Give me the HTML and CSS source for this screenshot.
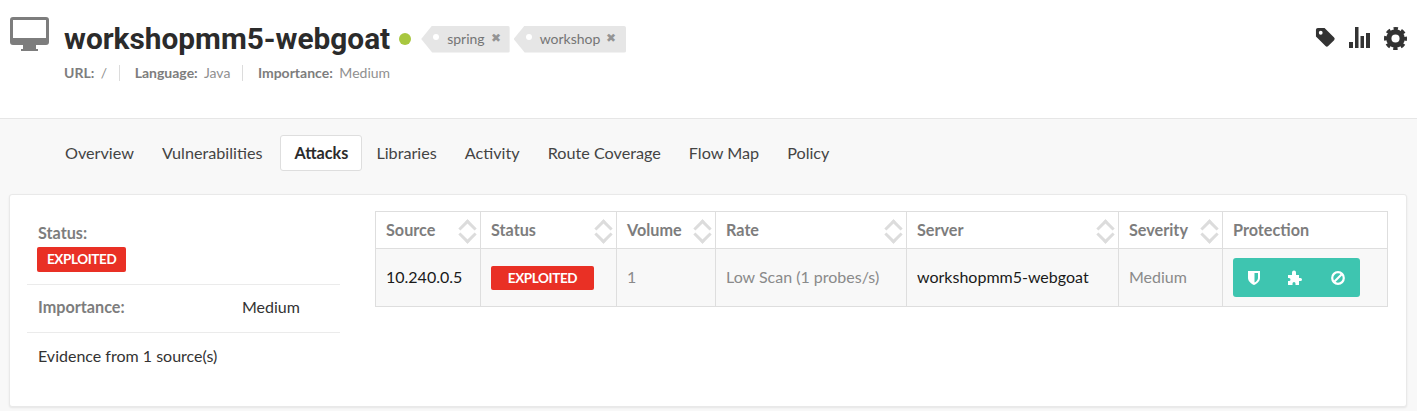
FILE: index.html
```html
<!DOCTYPE html>
<html lang="en">
  <head>
    <meta charset="UTF-8" />
    <title>workshopmm5-webgoat</title>
    <link rel="stylesheet" href="styles.css">
  </head>
  <body>
    <header class="app-header">
      <svg class="app-icon" viewBox="0 0 39 34" aria-hidden="true">
        <path fill="#7d7d7d" d="M3 0h33a3 3 0 0 1 3 3v22a3 3 0 0 1-3 3H26v4h2v2H11v-2h2v-4H3a3 3 0 0 1-3-3V3a3 3 0 0 1 3-3z" />
        <rect x="3" y="3" width="33" height="18" fill="#fff" />
      </svg>
      <div class="app-info">
        <div class="title-row">
          <h1>workshopmm5-webgoat</h1>
          <span class="status-dot"></span>
          <span class="tag">spring <span class="tag-x">&#10006;</span></span>
          <span class="tag">workshop <span class="tag-x">&#10006;</span></span>
        </div>
        <div class="meta-row">
          <span><b>URL:</b> /</span>
          <span class="meta-sep"></span>
          <span><b>Language:</b> Java</span>
          <span class="meta-sep"></span>
          <span><b>Importance:</b> Medium</span>
        </div>
      </div>
      <div class="header-actions">
        <svg width="21" height="21" viewBox="0 0 22 22" aria-hidden="true">
          <path fill="#333" fill-rule="evenodd" d="M3 1h7l10 10a2 2 0 0 1 0 2.800l-6.200 6.200a2 2 0 0 1-2.800 0L1 10V3a2 2 0 0 1 2-2zm3 3a2 2 0 1 0 0 4 2 2 0 0 0 0-4z" />
        </svg>
        <svg width="22" height="21" viewBox="0 0 22 21" aria-hidden="true">
          <path fill="#333" d="M0 15h4v6H0zM6 0h3.500v21H6zM11.500 9H15v12h-3.500zM17 6h4v15h-4z" />
        </svg>
        <svg width="23" height="23" viewBox="0 0 24 24" aria-hidden="true">
          <circle cx="12" cy="12" r="7" fill="none" stroke="#333" stroke-width="5.500" />
          <circle cx="12" cy="12" r="10" fill="none" stroke="#333" stroke-width="4" stroke-dasharray="4.400 3.450" stroke-dashoffset="2.200" />
        </svg>
      </div>
    </header>

    <main class="content">
      <nav class="tabs">
        <a>Overview</a>
        <a>Vulnerabilities</a>
        <a class="active">Attacks</a>
        <a>Libraries</a>
        <a>Activity</a>
        <a>Route Coverage</a>
        <a>Flow Map</a>
        <a>Policy</a>
      </nav>

      <section class="card">
        <aside class="summary">
          <div class="summary-row status-row">
            <div class="label">Status:</div>
            <span class="badge">EXPLOITED</span>
          </div>
          <div class="summary-row importance-row">
            <span class="label importance-label">Importance:</span>
            <span>Medium</span>
          </div>
          <div class="summary-row evidence-row">Evidence from 1 source(s)</div>
        </aside>

        <table class="attacks">
          <colgroup>
            <col class="c-source" /><col class="c-status" /><col class="c-volume" /><col class="c-rate" />
            <col class="c-server" /><col class="c-severity" /><col class="c-protection" />
          </colgroup>
          <thead>
            <tr>
              <th>Source<span class="sort"></span></th>
              <th>Status<span class="sort"></span></th>
              <th>Volume<span class="sort"></span></th>
              <th>Rate<span class="sort"></span></th>
              <th>Server<span class="sort"></span></th>
              <th>Severity<span class="sort"></span></th>
              <th>Protection</th>
            </tr>
          </thead>
          <tbody>
            <tr>
              <td class="text dark">10.240.0.5</td>
              <td><span class="badge badge-wide">EXPLOITED</span></td>
              <td class="text">1</td>
              <td class="text">Low Scan (1 probes/s)</td>
              <td class="text dark">workshopmm5-webgoat</td>
              <td class="text">Medium</td>
              <td>
                <div class="protect">
                  <svg width="14" height="14" viewBox="0 0 14 14" aria-hidden="true">
                    <path fill="#fff" d="M1 0h12v7c0 3-2.800 5.500-6 7C3.800 12.500 1 10 1 7z" />
                    <path fill="#3ec5b0" d="M7.500 2H11v5c0 1.800-1.500 3.400-3.500 4.600z" />
                  </svg>
                  <svg width="16" height="15" viewBox="0 0 16 15" aria-hidden="true">
                    <path fill="#fff" d="M0 5h4V2.500a2 2 0 0 1 4 0V5h3v3h1.500a1.500 1.500 0 0 1 0 3H11v4H7.500v-1.500a1.500 1.500 0 0 0-3 0V15H0v-4h1a1.500 1.500 0 0 0 0-3H0z" />
                  </svg>
                  <svg width="14" height="14" viewBox="0 0 14 14" aria-hidden="true">
                    <circle cx="7" cy="7" r="5.800" fill="none" stroke="#fff" stroke-width="2.200" />
                    <path stroke="#fff" stroke-width="2.200" d="M3 11L11 3" />
                  </svg>
                </div>
              </td>
            </tr>
          </tbody>
        </table>
      </section>
    </main>
  </body>
</html>
```

FILE: styles.css
```css
* {
  box-sizing: border-box;
}

html,
body {
  height: 100%;
}

body {
  margin: 0;
  font-family: Lato, sans-serif;
  font-size: 16px;
  color: #333;
  background-color: #f8f8f8;
  overflow: hidden;
}

.app-header {
  display: flex;
  height: 119px;
  padding: 17px 9px 0 10px;
  background: #fff;
  border-bottom: 1px solid #e6e6e6;
}

.app-icon {
  width: 39px;
  height: 34px;
  flex: none;
}

.app-info {
  margin-left: 15px;
}

.title-row {
  display: flex;
  align-items: center;
  height: 44px;
}

h1 {
  margin: 0 0 2px;
  font-family: Roboto, sans-serif;
  font-size: 29.800px;
  font-weight: 700;
  color: #2b2b2b;
}

.status-dot {
  width: 12px;
  height: 12px;
  margin: 0 10px 0 9px;
  border-radius: 50%;
  background: #a8c73f;
}

.tag {
  position: relative;
  display: inline-flex;
  align-items: center;
  gap: 6px;
  height: 27px;
  margin-right: 4px;
  padding: 0 9px 2px 26px;
  font-size: 14px;
  color: #757575;
  background: #e6e6e6;
  border-radius: 2px;
  clip-path: polygon(0 50%, 11px 0, 100% 0, 100% 100%, 11px 100%);
}

.tag + .tag {
  padding-right: 10px;
}

.tag::before {
  content: "";
  position: absolute;
  left: 12px;
  top: 8px;
  width: 6px;
  height: 6px;
  border-radius: 50%;
  background: #fff;
}

.tag-x {
  font-size: 11.500px;
  color: #949494;
}

.meta-row {
  display: flex;
  align-items: center;
  gap: 12px;
  margin-top: 3px;
  font-size: 14px;
  color: #8f8f8f;
}

.meta-row b {
  margin-right: 3px;
  color: #7d7d7d;
}

.meta-sep {
  width: 1px;
  height: 16px;
  margin-right: 2.500px;
  background: #dcdcdc;
}

.header-actions {
  display: flex;
  align-items: flex-start;
  gap: 13px;
  margin: 10px 0 0 auto;
  padding-right: 1px;
}

.tabs {
  display: flex;
  align-items: center;
  height: 75px;
  padding: 0 0 8px 51px;
}

.tabs a {
  padding: 0 13px;
  font-size: 16.200px;
  line-height: 34px;
  color: #444;
  border: 1px solid transparent;
  border-radius: 3px;
}

.tabs a.active {
  margin-left: 4px;
  font-weight: 700;
  color: #2b2b2b;
  background: #fff;
  border-color: #dedede;
}

.card {
  display: flex;
  gap: 35px;
  height: 213px;
  margin: 0 10px 0 9px;
  padding: 16px 18px 0 17px;
  background: #fff;
  border: 1px solid #e9e9e9;
  border-radius: 3px;
  box-shadow: 0 1px 2px rgba(0, 0, 0, 0.08);
}

.summary {
  width: 313px;
  flex: none;
}

.summary-row {
  padding: 0 10px;
  border-bottom: 1px solid #ebebeb;
}

.status-row {
  height: 74px;
  padding-top: 12px;
}

.importance-row {
  display: flex;
  height: 48px;
  align-items: center;
  padding-bottom: 4px;
}

.evidence-row {
  padding: 13px 10px 0 11px;
  border-bottom: none;
}

.label {
  margin-left: 1px;
  font-size: 16.200px;
  font-weight: 700;
  color: #7d7d7d;
}

.status-row .label {
  margin-bottom: 5px;
}

.importance-label {
  width: 204px;
}

.badge {
  display: inline-block;
  height: 25px;
  padding: 0 10px;
  font-size: 13.500px;
  font-weight: 700;
  line-height: 24px;
  letter-spacing: -0.4px;
  color: #fff;
  background: #e93025;
  border-radius: 2px;
}

.badge-wide {
  display: block;
  width: 103px;
  height: 24px;
  padding: 0;
  text-align: center;
}

.attacks {
  width: 1012px;
  height: 96px;
  table-layout: fixed;
  border-collapse: collapse;
}

.c-source { width: 105px; }
.c-status { width: 136px; }
.c-volume { width: 99px; }
.c-rate { width: 191px; }
.c-server { width: 212px; }
.c-severity { width: 104px; }
.c-protection { width: 165px; }

.attacks th,
.attacks td {
  padding: 0 10px;
  text-align: left;
  border: 1px solid #dedede;
}

.attacks th {
  position: relative;
  height: 37px;
  padding-bottom: 2px;
  font-size: 16.200px;
  font-weight: 700;
  color: #7d7d7d;
  background: #fff;
}

.attacks td {
  height: 58px;
  color: #8a8a8a;
  background: #f8f8f8;
}

.attacks td.text {
  padding-bottom: 2px;
}

.attacks td.dark {
  color: #1a1a1a;
}

/* two chevrons drawn with borders */
.sort {
  position: absolute;
  right: 6px;
  top: 7px;
  width: 16px;
  height: 24px;
}

.sort::before,
.sort::after {
  content: "";
  position: absolute;
  left: 3px;
  width: 10px;
  height: 10px;
  border: solid #dcdcdc;
  border-width: 3px 0 0 3px;
  transform: rotate(45deg);
}

.sort::before {
  top: 3px;
}

.sort::after {
  top: 9px;
  transform: rotate(225deg);
}

.protect {
  display: flex;
  align-items: center;
  justify-content: space-between;
  width: 127px;
  height: 39px;
  padding: 0 15px 0 14px;
  background: #3ec5b0;
  border-radius: 3px;
}
```
